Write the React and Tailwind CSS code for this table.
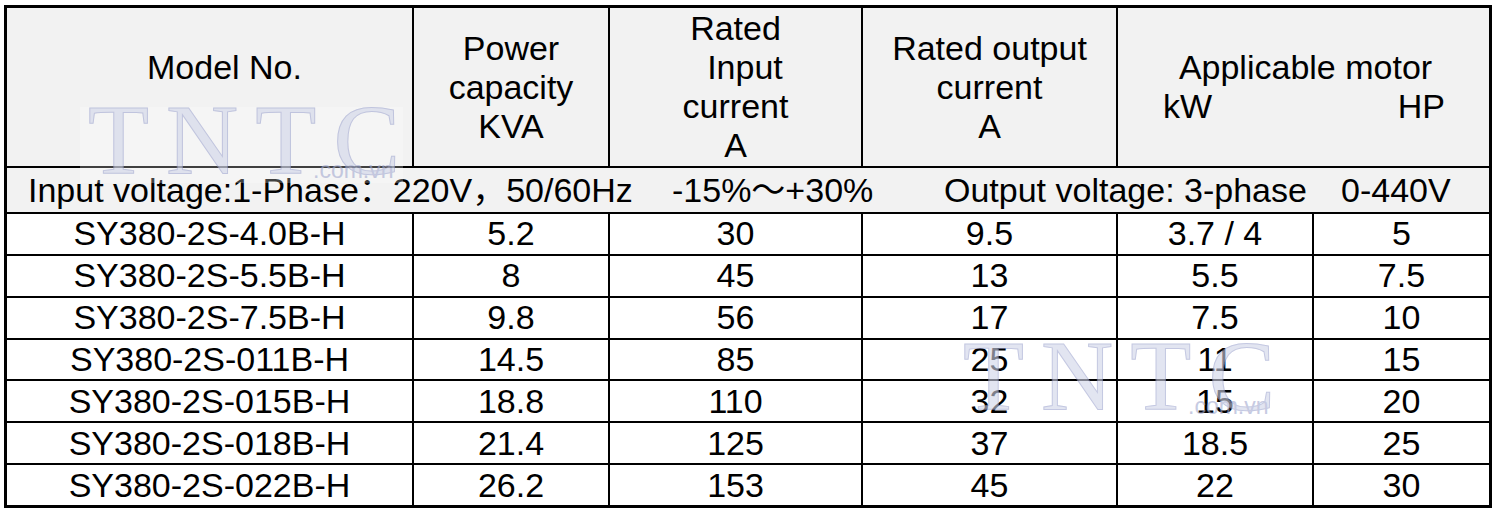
import React from "react";

const rows = [
  ["SY380-2S-4.0B-H", "5.2", "30", "9.5", "3.7 / 4", "5"],
  ["SY380-2S-5.5B-H", "8", "45", "13", "5.5", "7.5"],
  ["SY380-2S-7.5B-H", "9.8", "56", "17", "7.5", "10"],
  ["SY380-2S-011B-H", "14.5", "85", "25", "11", "15"],
  ["SY380-2S-015B-H", "18.8", "110", "32", "15", "20"],
  ["SY380-2S-018B-H", "21.4", "125", "37", "18.5", "25"],
  ["SY380-2S-022B-H", "26.2", "153", "45", "22", "30"],
];

function Watermark({ className }) {
  return (
    <div className={"pointer-events-none absolute opacity-60 " + className}>
      <div className="relative w-[320px] h-[90px]">
        <div className="absolute left-0 top-0 whitespace-nowrap font-['Liberation_Serif',serif] text-[100px] leading-none tracking-[17px] text-[#d0d4e8] [-webkit-text-stroke:1px_#9ea5cf]">
          TNTC
        </div>
        <div className="absolute left-[225px] top-[69px] whitespace-nowrap font-['Liberation_Sans',sans-serif] text-[23px] leading-none text-[#a2a9cf]">
          .com.vn
        </div>
      </div>
    </div>
  );
}

export default function App() {
  const head = "bg-[#f2f2f2] flex flex-col items-center justify-center text-center";
  return (
    <div className="relative w-[1498px] h-[512px] bg-white pl-[4px] pt-[5px] font-['Liberation_Sans','Noto_Sans_CJK_SC',sans-serif] text-[34px] leading-[39px] text-black">
      <div className="grid w-[1488px] h-[503px] border-[3px] border-black bg-black gap-[2px] grid-cols-[405px_194px_251px_253px_194px_175px] grid-rows-[158px_44px_repeat(7,minmax(0,1fr))]">
        <div className={head}>
          <div className="pl-[30px]">Model No.</div>
          <div>&nbsp;</div>
        </div>
        <div className={head}>
          <div>Power</div>
          <div>capacity</div>
          <div>KVA</div>
        </div>
        <div className={head}>
          <div>Rated</div>
          <div>{"\u00a0\u00a0Input"}</div>
          <div>current</div>
          <div>A</div>
        </div>
        <div className={head}>
          <div>Rated output</div>
          <div>current</div>
          <div>A</div>
        </div>
        <div className={"col-span-2 bg-[#f2f2f2] flex flex-col justify-center"}>
          <div className="text-center pl-[4px]">Applicable motor</div>
          <div className="flex justify-between pl-[45px] pr-[44px]">
            <span>kW</span>
            <span>HP</span>
          </div>
        </div>

        <div className="col-span-6 bg-[#f2f2f2] flex items-center whitespace-pre pl-[21px]">
          <span className="w-[644px] shrink-0">Input voltage:1-Phase：220V，50/60Hz</span>
          <span className="w-[272px] shrink-0">-15%～+30%</span>
          <span className="w-[397px] shrink-0">Output voltage: 3-phase</span>
          <span>0-440V</span>
        </div>

        {rows.map((r, i) =>
          r.map((c, j) => (
            <div key={i + "-" + j} className="bg-white flex items-center justify-center">
              {c}
            </div>
          ))
        )}
      </div>

      <div className="pointer-events-none absolute left-[80px] top-[107px] w-[323px] h-[76px] bg-white/25" />
      <Watermark className="left-[88px] top-[90px]" />
      <Watermark className="left-[963px] top-[326px]" />
    </div>
  );
}
